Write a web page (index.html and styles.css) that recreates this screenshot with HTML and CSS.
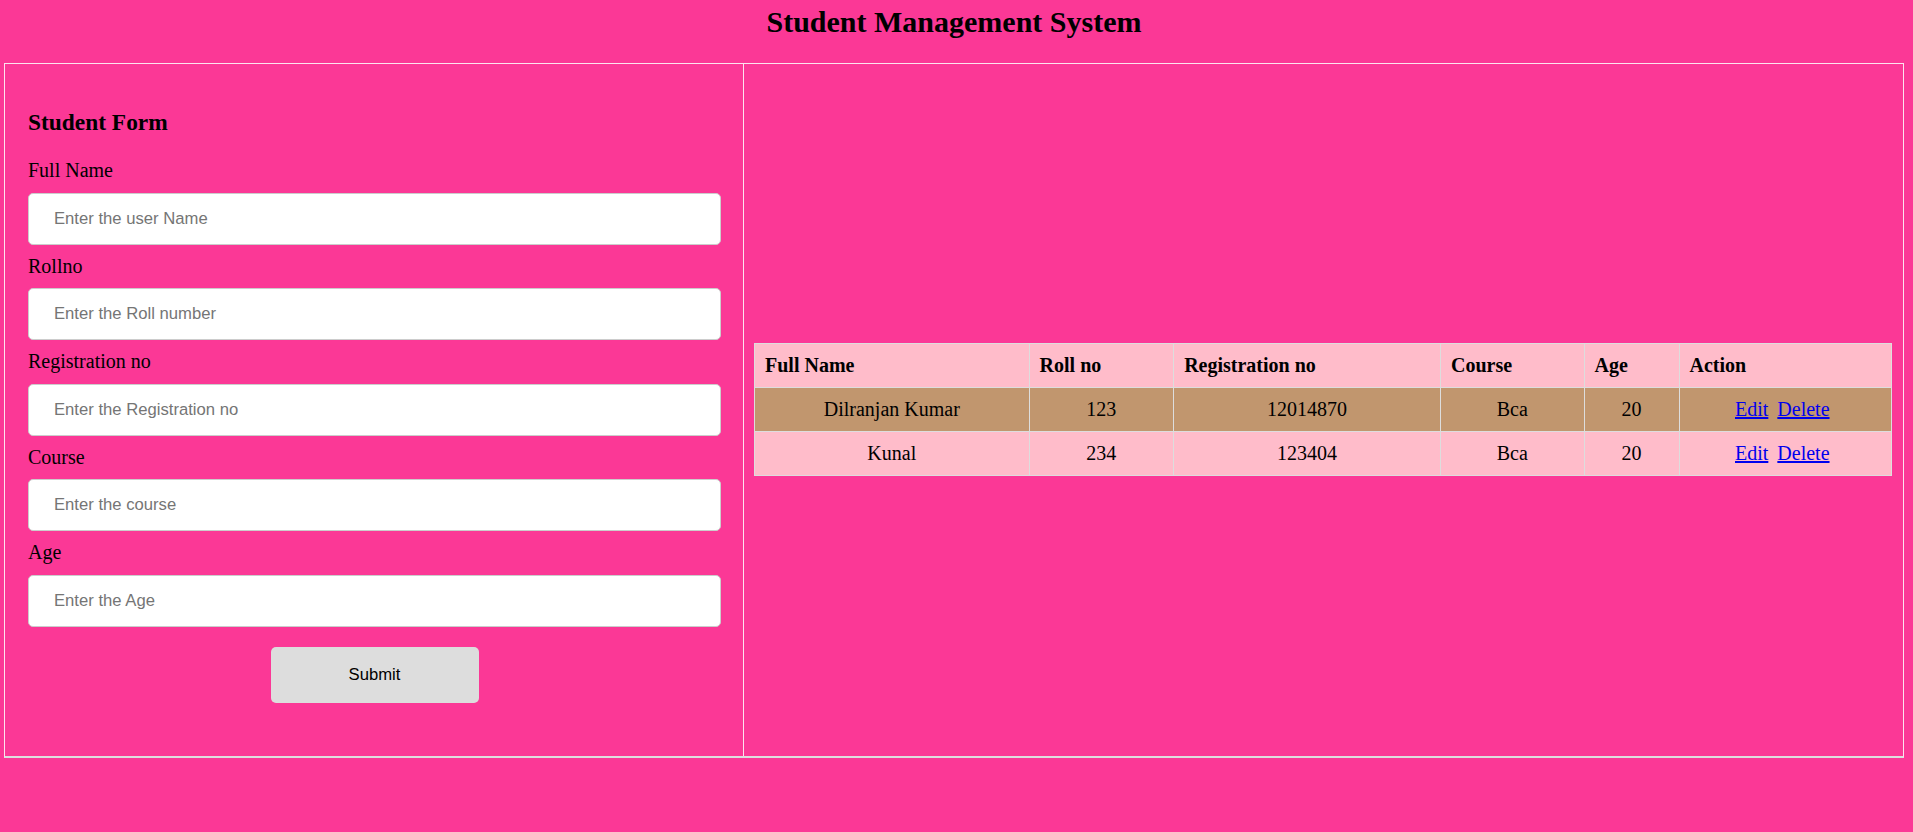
FILE: index.html
```html
<!DOCTYPE html>
<html lang="en">
<head>
<meta charset="utf-8">
<title>Student Management System</title>
<link rel="stylesheet" href="styles.css">
</head>
<body>
<div class="page">
  <h2 class="title">Student Management System</h2>
  <div class="layout">
    <div class="form-cell">
      <form class="student-form">
        <h3 class="form-title">Student Form</h3>
        <label class="field-label">Full Name</label>
        <input class="field-input" type="text" placeholder="Enter the user Name">
        <label class="field-label">Rollno</label>
        <input class="field-input" type="text" placeholder="Enter the Roll number">
        <label class="field-label">Registration no</label>
        <input class="field-input" type="text" placeholder="Enter the Registration no">
        <label class="field-label">Course</label>
        <input class="field-input" type="text" placeholder="Enter the course">
        <label class="field-label">Age</label>
        <input class="field-input" type="text" placeholder="Enter the Age">
        <div class="actions">
          <button class="submit-btn" type="button">Submit</button>
        </div>
      </form>
    </div>
    <div class="table-cell">
      <table class="students">
        <thead>
          <tr class="head-row">
            <th>Full Name</th>
            <th>Roll no</th>
            <th>Registration no</th>
            <th>Course</th>
            <th>Age</th>
            <th>Action</th>
          </tr>
        </thead>
        <tbody>
          <tr class="row-odd">
            <td>Dilranjan Kumar</td>
            <td>123</td>
            <td>12014870</td>
            <td>Bca</td>
            <td>20</td>
            <td><a href="#" class="act act-edit">Edit</a> <a href="#" class="act act-del">Delete</a></td>
          </tr>
          <tr class="row-even">
            <td>Kunal</td>
            <td>234</td>
            <td>123404</td>
            <td>Bca</td>
            <td>20</td>
            <td><a href="#" class="act act-edit">Edit</a> <a href="#" class="act act-del">Delete</a></td>
          </tr>
        </tbody>
      </table>
    </div>
  </div>
</div>
</body>
</html>
```

FILE: styles.css
```css
html, body {
  margin: 0;
  padding: 0;
}

body {
  background: #fb3896;
  font-family: "Liberation Serif", "Times New Roman", serif;
  font-size: 20px;
  color: #000;
}

.page {
  width: 1900px;
  margin-left: 4px;
}

.title {
  margin: 0 0 24px;
  padding-top: 5px;
  font-size: 30px;
  line-height: 34px;
  font-weight: bold;
  text-align: center;
}

.layout {
  display: grid;
  grid-template-columns: 739px 1fr;
  border-top: 1px solid #fde3ee;
  border-left: 1px solid #fde3ee;
  border-right: 1px solid #fde3ee;
  border-bottom: 2px solid #dedede;
}

.form-cell {
  border-right: 1px solid #fde3ee;
  padding: 22px 22px 53px 23px;
}

.student-form {
  display: flex;
  flex-direction: column;
}

.form-title {
  margin: 23px 0 23px;
  font-size: 23.4px;
  line-height: 27px;
  font-weight: bold;
}

.field-label {
  display: block;
  line-height: 23px;
  font-size: 20px;
}

.field-input {
  display: block;
  box-sizing: border-box;
  width: 100%;
  height: 52px;
  margin: 10.5px 0 10px;
  padding: 0 25px;
  border: 1px solid #cccccc;
  border-radius: 5px;
  background: #fff;
  font-family: "Liberation Sans", Arial, sans-serif;
  font-size: 16.67px;
  color: #000;
  outline: none;
}

.field-input::placeholder {
  color: #757575;
}

.actions {
  display: flex;
  justify-content: center;
  padding-top: 10px;
}

.submit-btn {
  width: 208px;
  height: 56px;
  border: none;
  border-radius: 5px;
  background: #dddddd;
  font-family: "Liberation Sans", Arial, sans-serif;
  font-size: 16.67px;
  color: #000;
}

.table-cell {
  display: flex;
  align-items: center;
  padding: 0 11px 0 10px;
}

.students {
  width: 100%;
  border-collapse: collapse;
  font-size: 20px;
}

.students th,
.students td {
  border: 1px solid #dddddd;
  padding: 10px;
  line-height: 23px;
}

.students th {
  text-align: left;
  font-weight: bold;
}

.students td {
  text-align: center;
}

.head-row,
.row-even {
  background: #ffbcca;
}

.row-odd {
  background: #c1966e;
}

.act {
  color: #0000ee;
  text-decoration: underline;
}

.act-edit {
  margin-left: 0;
}

.act-del {
  margin-left: 4px;
  margin-right: 6px;
}
```
